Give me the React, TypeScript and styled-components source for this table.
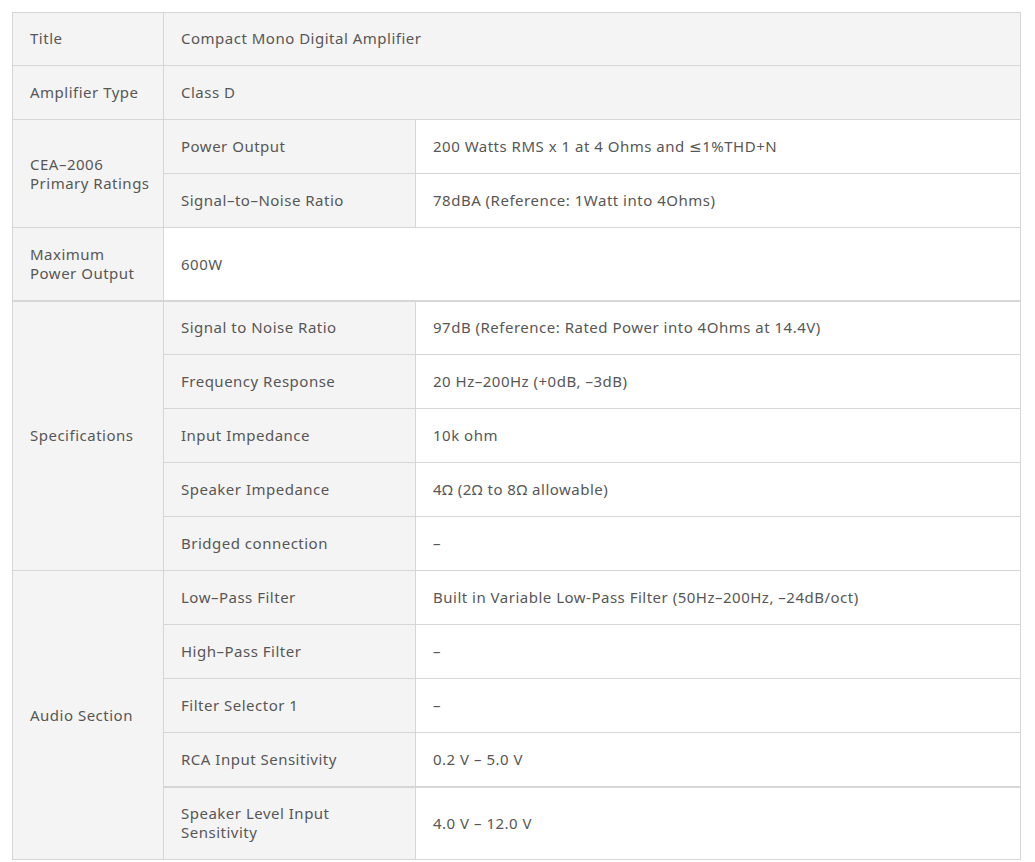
import React from "react";
import styled, { createGlobalStyle } from "styled-components";

const GlobalStyle = createGlobalStyle`
  body {
    margin: 0;
    background: #fff;
    font-family: "Noto Sans", "DejaVu Sans", sans-serif;
    color: #575757;
  }
`;

const Wrap = styled.div`
  padding: 12px 15px 0 12px;
`;

const Table = styled.table`
  width: 1009px;
  border-collapse: collapse;
  table-layout: fixed;
  font-size: 15px;
  line-height: 19px;
  letter-spacing: 0.5px;
`;

const Cell = styled.td<{ $grey?: boolean }>`
  border: 1px solid #d6d6d6;
  background: ${(p) => (p.$grey ? "#f4f4f4" : "#fff")};
  padding: 17px 13px 17px 17px;
  vertical-align: middle;
  text-align: left;

  tr:first-child > & {
    padding-top: 16px;
  }
`;

const Row = styled.tr<{ $split?: boolean }>`
  border-top: ${(p) => (p.$split ? "2px solid #d6d6d6" : "1px solid #d6d6d6")};

  ${(p) =>
    p.$split &&
    `
    & > td {
      padding-top: 16px;
    }
  `}
`;

type Spec = { label: string; value: string };

const ratings: Spec[] = [
  { label: "Power Output", value: "200 Watts RMS x 1 at 4 Ohms and \u22641%THD+N" },
  { label: "Signal-to-Noise Ratio", value: "78dBA (Reference: 1Watt into 4Ohms)" },
];

const specs: Spec[] = [
  { label: "Signal to Noise Ratio", value: "97dB (Reference: Rated Power into 4Ohms at 14.4V)" },
  { label: "Frequency Response", value: "20 Hz\u2013200Hz (+0dB, \u20133dB)" },
  { label: "Input Impedance", value: "10k ohm" },
  { label: "Speaker Impedance", value: "4\u03a9 (2\u03a9 to 8\u03a9 allowable)" },
  { label: "Bridged connection", value: "\u2013" },
];

const audio: Spec[] = [
  { label: "Low-Pass Filter", value: "Built in Variable Low-Pass Filter (50Hz\u2013200Hz, \u201324dB/oct)" },
  { label: "High-Pass Filter", value: "\u2013" },
  { label: "Filter Selector 1", value: "\u2013" },
  { label: "RCA Input Sensitivity", value: "0.2 V \u2013 5.0 V" },
  { label: "Speaker Level Input Sensitivity", value: "4.0 V \u2013 12.0 V" },
];

const fix = (s: string) => s.replace(/-/g, "\u2013");

const Group: React.FC<{ title: string; items: Spec[]; splitAt?: number[] }> = ({
  title,
  items,
  splitAt = [],
}) => (
  <>
    {items.map((it, i) => (
      <Row key={it.label} $split={splitAt.includes(i)}>
        {i === 0 && (
          <Cell $grey rowSpan={items.length}>
            {fix(title)}
          </Cell>
        )}
        <Cell $grey>{fix(it.label)}</Cell>
        <Cell>{it.value}</Cell>
      </Row>
    ))}
  </>
);

export default function App() {
  return (
    <>
      <GlobalStyle />
      <Wrap>
        <Table>
          <colgroup>
            <col style={{ width: 151 }} />
            <col style={{ width: 252 }} />
            <col />
          </colgroup>
          <tbody>
            <Row>
              <Cell $grey>Title</Cell>
              <Cell $grey colSpan={2}>Compact Mono Digital Amplifier</Cell>
            </Row>
            <Row>
              <Cell $grey>Amplifier Type</Cell>
              <Cell $grey colSpan={2}>Class D</Cell>
            </Row>
            <Group title="CEA-2006 Primary Ratings" items={ratings} />
            <Row>
              <Cell $grey>Maximum Power Output</Cell>
              <Cell colSpan={2}>600W</Cell>
            </Row>
            <Group title="Specifications" items={specs} splitAt={[0]} />
            <Group title="Audio Section" items={audio} splitAt={[4]} />
          </tbody>
        </Table>
      </Wrap>
    </>
  );
}
